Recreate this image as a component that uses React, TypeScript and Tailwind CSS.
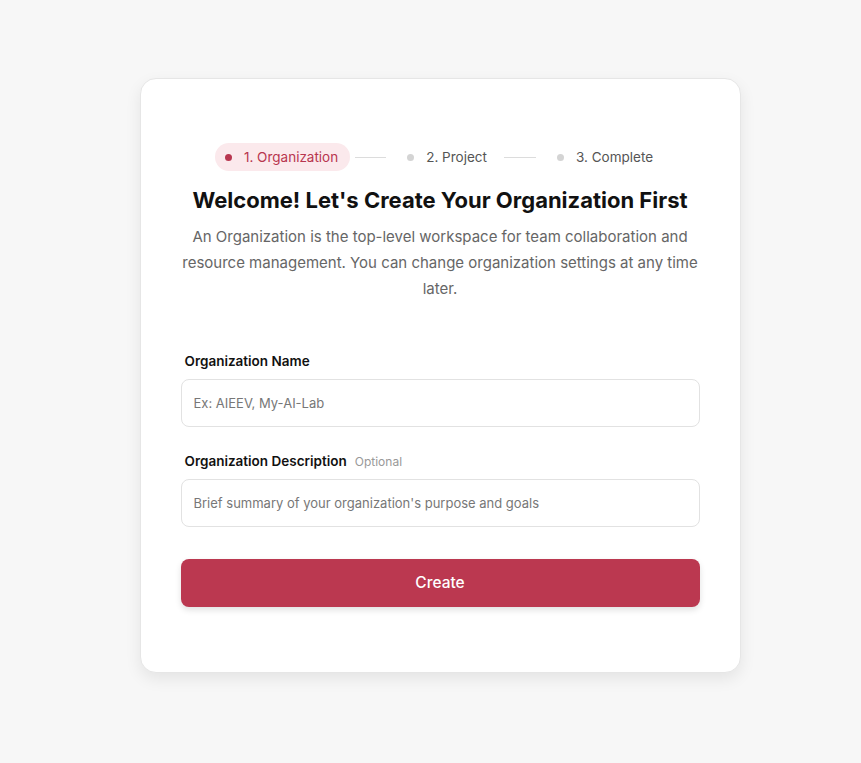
export default function App() {
  return (
    <div className="min-h-screen bg-[#f7f7f7] flex justify-center pl-[19px] pt-[78px] font-['Inter',sans-serif]">
      <div className="w-[601px] h-fit bg-white rounded-2xl border border-[#e6e6e6] shadow-[0_6px_16px_rgba(0,0,0,0.08)] px-10 pt-16 pb-[65px]">
        {/* Stepper */}
        <div className="flex items-center justify-center gap-[5px] text-[13.5px]">
          <div className="flex items-center gap-3 pl-[10px] pr-3 h-[28px] rounded-full bg-[#fbe9ec] text-[#b8364f]">
            <span className="w-[7px] h-[7px] rounded-full bg-[#b8364f]" />
            <span>1. Organization</span>
          </div>
          <div className="w-[31px] h-px bg-[#dcdcdc]" />
          <div className="flex items-center gap-3 pl-4 pr-3 text-[#555]">
            <span className="w-[7px] h-[7px] rounded-full bg-[#d4d4d4]" />
            <span>2. Project</span>
          </div>
          <div className="w-8 h-px bg-[#dcdcdc]" />
          <div className="flex items-center gap-3 pl-4 pr-3 text-[#555]">
            <span className="w-[7px] h-[7px] rounded-full bg-[#d4d4d4]" />
            <span>3. Complete</span>
          </div>
        </div>

        <h1 className="mt-[15px] text-center text-[22px] leading-[28px] font-bold text-[#111]">
          Welcome! Let's Create Your Organization First
        </h1>
        <p className="mt-[10px] text-center text-[15px] leading-[26px] text-[#666]">
          An Organization is the top-level workspace for team collaboration and resource management. You can change organization settings at any time later.
        </p>

        <form className="mt-[49px] flex flex-col">
          <label className="px-1 text-[13.5px] leading-5 font-semibold text-[#111]">Organization Name</label>
          <input
            className="mt-2 h-12 w-full rounded-lg border border-[#e2e2e2] px-3 text-[13px] text-[#333] placeholder:text-[#777] outline-none"
            placeholder="Ex: AIEEV, My-AI-Lab"
          />
          <div className="mt-6 px-1 flex items-baseline gap-2">
            <label className="text-[13.5px] leading-5 font-semibold text-[#111]">Organization Description</label>
            <span className="text-[12px] text-[#999]">Optional</span>
          </div>
          <input
            className="mt-2 h-12 w-full rounded-lg border border-[#e2e2e2] px-3 text-[13px] text-[#333] placeholder:text-[#777] outline-none"
            placeholder="Brief summary of your organization's purpose and goals"
          />
          <button
            type="button"
            className="mt-8 h-12 w-full rounded-lg bg-[#bb3850] text-white text-[15.5px] font-medium shadow-[0_3px_6px_rgba(0,0,0,0.12)]"
          >
            Create
          </button>
        </form>
      </div>
    </div>
  );
}
